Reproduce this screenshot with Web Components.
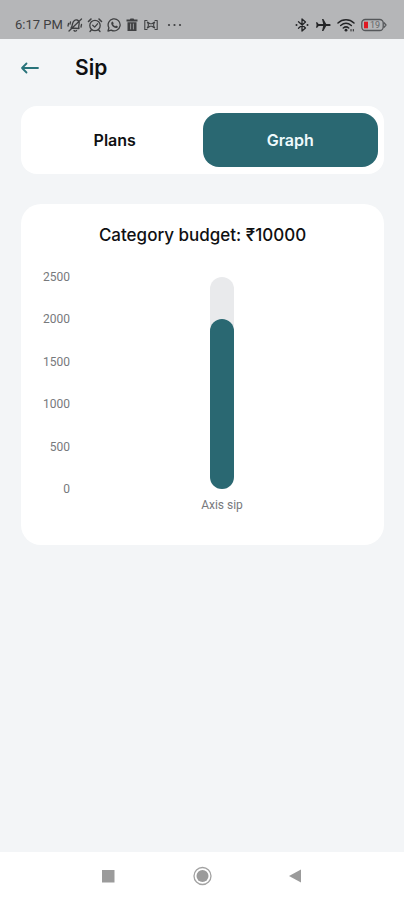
<!DOCTYPE html>
<html lang="en">
<head>
<meta charset="utf-8">
<meta name="viewport" content="width=device-width, initial-scale=1">
<title>Sip</title>
<style>
  body { margin: 0; font-family: Inter, "Noto Sans", sans-serif; color: #0f1012; background: #f3f5f7; }
</style>
</head>
<body>
<sip-screen></sip-screen>
<script>
  const define = (name, html, setup) => {
    const template = document.createElement('template');
    template.innerHTML = html;
    customElements.define(name, class extends HTMLElement {
      constructor() {
        super();
        this.attachShadow({ mode: 'open' }).append(template.content.cloneNode(true));
      }
      connectedCallback() { if (setup) setup(this, this.shadowRoot); }
    });
  };

  define('status-bar', `
    <style>
      :host { display: flex; justify-content: space-between; align-items: center; height: 39px; padding: 10px 17px 0 15px;
        box-sizing: border-box; background: #b5b6b8; color: #3f4042; font: 13px/16px Roboto, sans-serif; }
      div { display: flex; align-items: center; gap: 6px; }
      .left { gap: 4px; }
      svg { display: block; fill: none; stroke: currentColor; stroke-width: 1.3; stroke-linecap: round; stroke-linejoin: round; }
      .solid { fill: currentColor; stroke: none; }
      .right { color: #242527; }
      text { font: 9px Roboto, sans-serif; fill: #66686a; stroke: none; }
    </style>
    <div class="left">
      <span class="time">6:17 PM</span>
      <svg width="16" height="16" viewBox="0 0 16 16"><path d="M4 11c1-1 1-2 1.500-4C6 4 8 2.500 10 3c2 .5 2.500 2.500 2 4.500-.4 1.700-.5 2.500 0 4zM7 13.500c.8.900 2 .9 2.600 0M2 14L14.500 2M1.500 6.500L1 9M3.500 5L3 7M14.500 7.500L14 10"/></svg>
      <svg width="16" height="16" viewBox="0 0 16 16"><circle cx="8" cy="8.500" r="5.200"/><path stroke-width="1.600" d="M1.500 4.500L4 2M14.500 4.500L12 2"/><path d="M4.500 12.800L3 14.500M11.500 12.800L13 14.500M5.700 8.200l2 1.900 2.800-3.300"/></svg>
      <svg width="14" height="16" viewBox="0 0 14 16"><path d="M1 14l.9-3.200a6 6 0 1 1 2.300 2.300z"/><path class="solid" d="M4.700 5l1.100-.4.9 1.900-.6.8c.5 1 1.200 1.600 2.200 2l.8-.8 1.800.9c0 1.200-1 1.800-2 1.700C6.500 10.700 4.400 8.500 4.200 6.500c0-.6.200-1.100.5-1.500z"/></svg>
      <svg width="14" height="16" viewBox="-1 0 14 16"><path fill="currentColor" stroke="none" d="M.5 2.500h3.300l.7-1h3l.7 1h3.300v2H.5zM1.500 5.300h9V14h-9z"/><path stroke="#9a9b9d" stroke-width="1" d="M4.600 7v5M7.400 7v5"/></svg>
      <svg width="16" height="16" viewBox="0 0 16 16"><path stroke-width="1.100" d="M4 3.500H1.800v9H4M12 3.500h2.200v9H12M4.300 5.200c1.400 1.800 1.400 3.800 0 5.600M11.700 5.200c-1.400 1.800-1.400 3.800 0 5.600M4.800 5.200L7 6.800h2l2.200-1.600M4.800 10.800L7 9.200h2l2.200 1.600"/></svg>
      <svg width="24" height="16" viewBox="0 0 24 16"><g class="solid"><circle cx="6" cy="8" r="1.100"/><circle cx="11.500" cy="8" r="1.100"/><circle cx="17" cy="8" r="1.100"/></g></svg>
    </div>
    <div class="right">
      <svg width="14" height="16" viewBox="0 0 14 16"><path d="M3.500 4.800l7 6.200L7 14V2l3.500 3-7 6.200"/><g class="solid"><circle cx="1.500" cy="8" r="1"/><circle cx="12.500" cy="8" r="1"/></g></svg>
      <svg width="16" height="16" viewBox="0 0 16 16"><path class="solid" d="M15.700 8c0-.7-.7-1.100-1.500-1.100h-3L8.400 2H7l1.200 4.900H3.600L2.200 5.300H1L1.600 8 1 10.700h1.200l1.400-1.600h4.600L7 14h1.400l2.800-4.900h3c.8 0 1.500-.4 1.500-1.100z"/></svg>
      <svg width="18" height="16" viewBox="0 0 18 16"><path stroke-width="1.500" d="M1 6c4.500-4.200 11.500-4.200 16 0M3.700 8.500c3.200-2.700 7.400-2.700 10.600 0M6.300 11c1.700-1.400 3.700-1.400 5.400 0"/><circle class="solid" cx="9" cy="13.200" r="1.400"/><path stroke-width="1" d="M14 12.500v1.500M16.300 12.500v1.500"/></svg>
      <svg width="26" height="16" viewBox="0 0 26 16"><rect x=".8" y="2.500" width="21.400" height="11" rx="3.500" stroke="#55575a"/><path stroke="#55575a" d="M23 5.800l2 2.200-2 2.200"/><path fill="#e01822" stroke="none" d="M3 4.700h4v6.600H3z"/><text x="9" y="11.300">19</text></svg>
    </div>`);

  define('page-header', `
    <style>
      :host { display: flex; align-items: center; gap: 35px; height: 57px; padding: 0 20px; }
      button { display: flex; width: 20px; height: 20px; padding: 0; border: 0; background: none; color: #28737a; align-items: center; }
      h1 { margin: 0; font-size: 21px; line-height: 28px; font-weight: 600; }
    </style>
    <button type="button" aria-label="Back"><svg width="20" height="16" viewBox="0 0 20 16" fill="none" stroke="currentColor" stroke-width="1.800" stroke-linecap="round" stroke-linejoin="round"><path d="M18 8H2M6.500 3.500L2 8l4.500 4.500"/></svg></button>
    <h1><slot></slot></h1>`);

  define('tab-switch', `
    <style>
      :host { display: flex; padding: 7px 6px; border-radius: 16px; background: #fff; }
    </style>
    <slot></slot>`);

  define('tab-item', `
    <style>
      :host { display: flex; flex: 1; }
      button { flex: 1; height: 54px; padding: 0; border: 0; border-radius: 16px; background: none; color: inherit;
        font: 600 16px/20px Inter, sans-serif; }
      :host([selected]) button { background: #2a6872; color: #eefafc; }
    </style>
    <button type="button"><slot></slot></button>`,
    (host, root) => root.querySelector('button').setAttribute('aria-pressed', host.hasAttribute('selected')));

  define('content-card', `
    <style>
      :host { display: block; padding: 18px 18px 32px; border-radius: 20px; background: #fff; }
      h2 { margin: 0 0 21px; text-align: center; font-size: 17px; line-height: 26px; font-weight: 500; }
    </style>
    <h2><slot name="title"></slot></h2>
    <slot></slot>`);

  define('bar-chart', `
    <style>
      :host { display: grid; grid-template-columns: 31px 1fr; column-gap: 8px; color: #77797c; font: 12px/16px Roboto, sans-serif; }
      .axis { display: flex; flex-direction: column; justify-content: space-between; height: 228px; text-align: right; }
      .plot { display: flex; justify-content: space-around; padding: 8px 0; }
      .names { grid-column: 2; display: flex; justify-content: space-around; }
    </style>
    <div class="axis"></div>
    <div class="plot"><slot></slot></div>
    <div class="names"></div>`,
    (host, root) => {
      const max = Number(host.getAttribute('max'));
      const step = Number(host.getAttribute('step'));
      const add = (parent, text) => {
        const span = document.createElement('span');
        span.textContent = text;
        root.querySelector(parent).append(span);
      };
      for (let v = max; v >= 0; v -= step) add('.axis', v);
      for (const bar of host.querySelectorAll('chart-bar')) {
        bar.style.setProperty('--share', bar.getAttribute('value') / max * 100 + '%');
        add('.names', bar.getAttribute('name'));
      }
    });

  define('chart-bar', `
    <style>
      :host { display: flex; align-items: flex-end; width: 24px; border-radius: 12px; background: #e9eaec; }
      div { width: 100%; height: var(--share); border-radius: 12px; background: #2a6872; }
    </style>
    <div></div>`);

  define('system-nav', `
    <style>
      :host { display: flex; justify-content: center; gap: 70px; height: 48px; align-items: center; background: #fff; }
      button { display: flex; width: 24px; height: 24px; padding: 0; border: 0; background: none; }
    </style>
    <button type="button" aria-label="Recent apps"><svg width="24" height="24"><path fill="#9b9b9b" d="M6 6h12.500v12.500H6z"/></svg></button>
    <button type="button" aria-label="Home"><svg width="24" height="24"><circle cx="12.500" cy="12" r="8.500" fill="none" stroke="#a2a2a2" stroke-width="1.300"/><circle cx="12.500" cy="12" r="6" fill="#9b9b9b"/></svg></button>
    <button type="button" aria-label="Back"><svg width="24" height="24"><path fill="#9b9b9b" d="M5 12l12-6.500v13z"/></svg></button>`);

  define('sip-screen', `
    <style>
      :host { display: flex; flex-direction: column; min-height: 100vh; }
      main { flex: 1; display: flex; flex-direction: column; gap: 30px; padding: 10px 20px 30px 21px; }
    </style>
    <status-bar></status-bar>
    <page-header>Sip</page-header>
    <main>
      <tab-switch><tab-item>Plans</tab-item><tab-item selected>Graph</tab-item></tab-switch>
      <content-card>
        <span slot="title">Category budget: ₹10000</span>
        <bar-chart max="2500" step="500"><chart-bar name="Axis sip" value="2000"></chart-bar></bar-chart>
      </content-card>
    </main>
    <system-nav></system-nav>`);
</script>
</body>
</html>
